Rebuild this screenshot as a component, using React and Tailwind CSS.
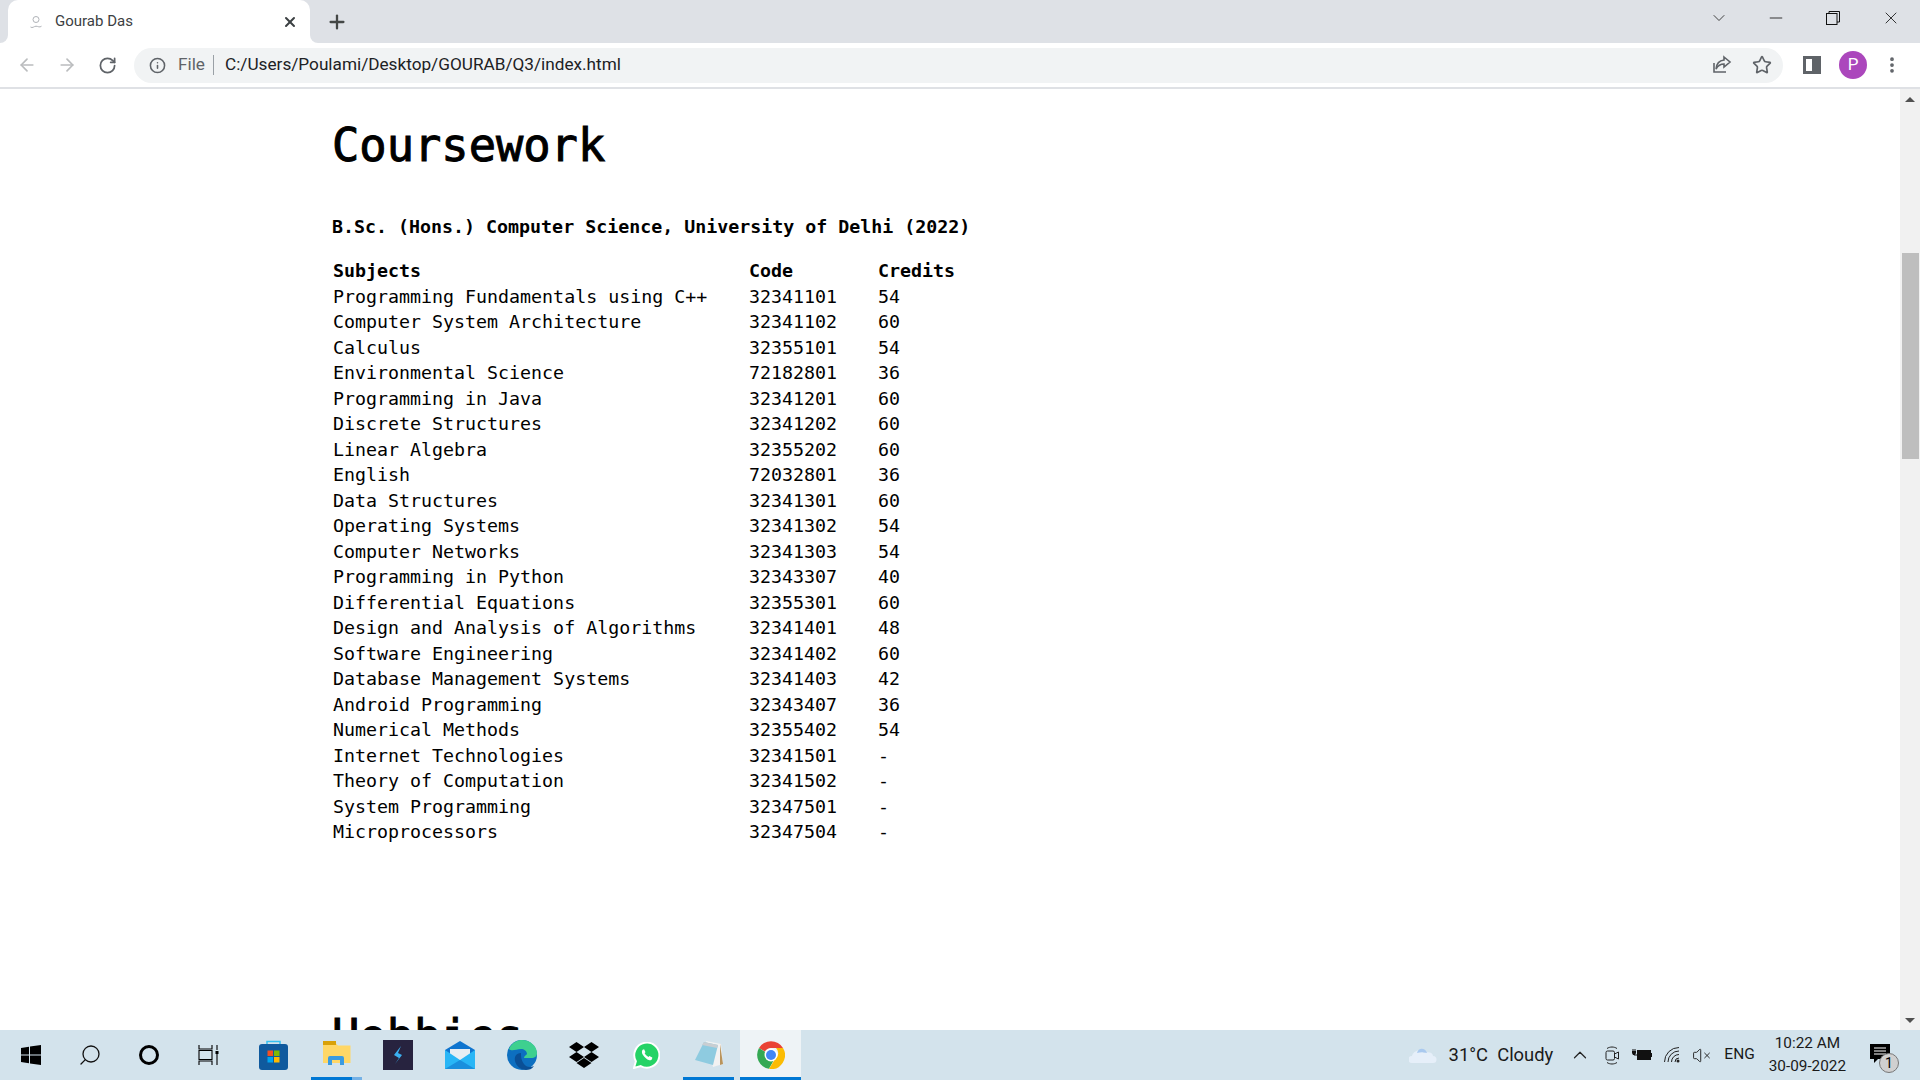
import React from 'react';
import { ArrowLeft, ArrowRight, RotateCw, Info, Star, X, Plus, ChevronDown, Minus, Search, ChevronUp, VolumeX, MoreVertical } from 'lucide-react';

const courses = [
  ['Programming Fundamentals using C++', '32341101', '54'],
  ['Computer System Architecture', '32341102', '60'],
  ['Calculus', '32355101', '54'],
  ['Environmental Science', '72182801', '36'],
  ['Programming in Java', '32341201', '60'],
  ['Discrete Structures', '32341202', '60'],
  ['Linear Algebra', '32355202', '60'],
  ['English', '72032801', '36'],
  ['Data Structures', '32341301', '60'],
  ['Operating Systems', '32341302', '54'],
  ['Computer Networks', '32341303', '54'],
  ['Programming in Python', '32343307', '40'],
  ['Differential Equations', '32355301', '60'],
  ['Design and Analysis of Algorithms', '32341401', '48'],
  ['Software Engineering', '32341402', '60'],
  ['Database Management Systems', '32341403', '42'],
  ['Android Programming', '32343407', '36'],
  ['Numerical Methods', '32355402', '54'],
  ['Internet Technologies', '32341501', '-'],
  ['Theory of Computation', '32341502', '-'],
  ['System Programming', '32347501', '-'],
  ['Microprocessors', '32347504', '-'],
];

const uiFont = "font-['Roboto',sans-serif]";

function TabFlare({ side }) {
  return (
    <div className="h-[8px] w-[8px] shrink-0 bg-white">
      <div className={`h-full w-full bg-[#dee1e6] ${side === 'left' ? 'rounded-br-[8px]' : 'rounded-bl-[8px]'}`} />
    </div>
  );
}

function TabStrip() {
  return (
    <div className="flex h-[43px] shrink-0 items-end bg-[#dee1e6]">
      <TabFlare side="left" />
      <div className="flex h-[43px] w-[302px] shrink-0 items-center rounded-t-[10px] bg-white pl-[20px] pr-[12px]">
        <svg width="16" height="16" viewBox="0 0 16 16" fill="none" stroke="#b0b3b8" strokeWidth="1">
          <circle cx="8" cy="5.5" r="3" />
          <path d="M2.5 13c2 1.6 3.5-.8 5.5-.8s3.5 1.6 5.5 0" />
        </svg>
        <span className={`ml-[11px] flex-1 text-[15px] text-[#3c4043] ${uiFont}`}>Gourab Das</span>
        <X size={16} strokeWidth={3} color="#3c4043" />
      </div>
      <TabFlare side="right" />
      <div className="ml-[8px] flex h-[43px] items-center">
        <Plus size={22} strokeWidth={2.5} color="#444746" />
      </div>
      <div className="flex flex-1 self-start pt-[9px]">
        <div className="ml-auto flex h-[18px] items-center">
          <ChevronDown size={20} strokeWidth={1} color="#222" />
          <Minus size={20} strokeWidth={1} color="#111" className="ml-[37px]" />
          <svg width="14" height="14" viewBox="0 0 14 14" fill="none" stroke="#111" strokeWidth="1" className="ml-[40px]">
            <rect x="0.5" y="2.5" width="10.5" height="11" />
            <path d="M3 2.5V.5h10.5v10.5H11" />
          </svg>
          <X size={20} strokeWidth={1} color="#111" className="ml-[41px] mr-[19px]" />
        </div>
      </div>
    </div>
  );
}

function Toolbar() {
  return (
    <div className="flex h-[46px] shrink-0 items-center border-b-2 border-[#dfe1e5] bg-white pl-[17px]">
      <ArrowLeft size={20} strokeWidth={2} color="#babcbe" />
      <ArrowRight size={20} strokeWidth={2} color="#babcbe" className="ml-[20px]" />
      <RotateCw size={19} strokeWidth={2.2} color="#5f6368" className="ml-[21px]" />
      <div className={`ml-[17px] flex h-[35px] w-[1649px] items-center rounded-full bg-[#f1f3f4] pl-[15px] text-[17.2px] ${uiFont}`}>
        <Info size={17} strokeWidth={2.2} color="#5f6368" />
        <span className="ml-[12px] text-[#5f6368]">File</span>
        <span className="ml-[8px] h-[20px] w-px bg-[#9aa0a6]" />
        <span className="ml-[11px] text-[#202124]">C:/Users/Poulami/Desktop/GOURAB/Q3/index.html</span>
        <svg width="20" height="20" viewBox="0 0 20 20" fill="none" stroke="#5f6368" strokeWidth="1.6" className="ml-auto">
          <path d="M2 8v9h12" />
          <path d="M12 2l6 5-6 5V9c-4 0-6 1.500-8 5 .5-5 3-8.500 8-9z" />
        </svg>
        <Star size={20} strokeWidth={2} color="#5f6368" className="ml-[20px] mr-[11px]" />
      </div>
      <div className="ml-[20px] flex h-[18px] w-[18px] items-center justify-end border-[3px] border-[#5f6368] bg-white">
        <div className="h-full w-[6px] bg-[#5f6368]" />
      </div>
      <div className={`ml-[18px] flex h-[28px] w-[28px] items-center justify-center rounded-full bg-[#ab47bc] text-[17px] text-white ${uiFont}`}>P</div>
      <MoreVertical size={20} strokeWidth={2.5} color="#5f6368" className="ml-[15px]" />
    </div>
  );
}

function Scrollbar() {
  return (
    <div className="flex w-[20px] shrink-0 flex-col items-center bg-[#f1f1f1]">
      <div className="flex h-[20px] items-center justify-center">
        <div className="h-0 w-0 border-x-[5px] border-b-[5px] border-x-transparent border-b-[#505050]" />
      </div>
      <div className="mt-[144px] h-[206px] w-[17px] bg-[#bebebe]" />
      <div className="mt-auto flex h-[20px] items-center justify-center">
        <div className="h-0 w-0 border-x-[5px] border-t-[5px] border-x-transparent border-t-[#505050]" />
      </div>
    </div>
  );
}

function Content() {
  return (
    <div className="min-w-0 flex-1 overflow-hidden bg-white pl-[332px] font-['DejaVu_Sans_Mono',monospace] text-black">
      <h1 className="mt-[27px] h-[60px] text-[45.4px] leading-[60px] [-webkit-text-stroke:1px_black]">Coursework</h1>
      <p className="mt-[39px] h-[24px] text-[18.3px] leading-[24px] font-bold">B.Sc. (Hons.) Computer Science, University of Delhi (2022)</p>
      <table className="mt-[19px] border-collapse text-[18.3px] leading-[25.5px]">
        <thead>
          <tr>
            <th className="w-[417px] pl-px text-left font-bold">Subjects</th>
            <th className="w-[129px] text-left font-bold">Code</th>
            <th className="text-left font-bold">Credits</th>
          </tr>
        </thead>
        <tbody>
          {courses.map((c) => (
            <tr key={c[1]}>
              <td className="pl-px whitespace-pre">{c[0]}</td>
              <td>{c[1]}</td>
              <td>{c[2]}</td>
            </tr>
          ))}
        </tbody>
      </table>
      <h1 className="mt-[162px] h-[60px] text-[45.4px] leading-[60px] [-webkit-text-stroke:1px_black]">Hobbies</h1>
    </div>
  );
}

function TaskIcon({ children, active, open, tail, className = 'w-[62px]' }) {
  return (
    <div className={`relative flex h-full shrink-0 items-center justify-center ${active ? 'bg-[#eef3f6]' : ''} ${className}`}>
      {children}
      {open && <div className="absolute bottom-0 left-0 h-[3px] w-full bg-[#0078d4]" />}
      {tail && <div className="absolute bottom-0 right-0 h-[3px] w-[10px] bg-[#74b1e6]" />}
    </div>
  );
}

function Taskbar() {
  return (
    <div className={`flex h-[50px] shrink-0 items-center bg-[#d3e3ec] text-[#1a1a1a] ${uiFont}`}>
      <TaskIcon className="w-[61px]">
        <svg width="20" height="20" viewBox="0 0 20 20" fill="#000"><path d="M0 3l8-1.200V9.500H0zM9 1.600L20 0v9.500H9zM0 10.500h8v7.700L0 17zM9 10.500h11V20L9 18.400z" /></svg>
      </TaskIcon>
      <TaskIcon className="w-[57px]"><Search size={24} strokeWidth={1.3} color="#111" className="-scale-x-100" /></TaskIcon>
      <TaskIcon className="w-[62px]"><div className="h-[20px] w-[20px] rounded-full border-[3px] border-black" /></TaskIcon>
      <TaskIcon className="w-[58px]">
        <svg width="22" height="20" viewBox="0 0 22 20" fill="none" stroke="#000" strokeWidth="1.100">
          <path d="M1 0v4h13V0M1 5.500h13v9H1zM1 20v-4h13v4M19 0v5M19 9v11" />
          <rect x="17.500" y="6" width="3" height="3" fill="#000" stroke="none" />
        </svg>
      </TaskIcon>
      <TaskIcon className="w-[71px]">
        <svg width="29" height="30" viewBox="0 0 29 30">
          <path d="M8 5V1.500h13V5" fill="none" stroke="#35c0f0" strokeWidth="1.500" />
          <rect y="4" width="29" height="26" rx="3" fill="#0f5a9e" />
          <rect x="8.500" y="10.500" width="5.500" height="5.500" fill="#f25022" />
          <rect x="15" y="10.500" width="5.500" height="5.500" fill="#7fba00" />
          <rect x="8.500" y="17" width="5.500" height="5.500" fill="#00a4ef" />
          <rect x="15" y="17" width="5.500" height="5.500" fill="#ffb900" />
        </svg>
      </TaskIcon>
      <TaskIcon open tail className="ml-[2px] w-[51px]">
        <svg width="28" height="24" viewBox="0 0 28 24" className="-translate-y-[2px]">
          <path d="M0 1.500h12l3 3h12.500V22H0z" fill="#ffd766" />
          <path d="M0 0h13v4H0z" fill="#d9a108" />
          <path d="M5 24v-7a2 2 0 012-2h12a2 2 0 012 2v7h-4v-5H9v5z" fill="#3b9be0" />
        </svg>
      </TaskIcon>
      <TaskIcon className="w-[72px]">
        <div className="flex h-[30px] w-[30px] items-center justify-center bg-[#27233f]">
          <svg width="10" height="18" viewBox="0 0 10 18" fill="#3bb0f0"><path d="M8 0L1 9l5 3-4 6 7-9-4-2z" /></svg>
        </div>
      </TaskIcon>
      <TaskIcon className="w-[52px]">
        <svg width="30" height="28" viewBox="0 0 30 28">
          <path d="M15 0l15 9v19H0V9z" fill="#0f75cf" />
          <path d="M5 8h20v7l-10 6-10-6z" fill="#e8eef3" />
          <path d="M0 9l15 10L30 9v19H0z" fill="#29b6f6" />
          <path d="M0 28L15 19l15 9z" fill="#1a8fdd" />
        </svg>
      </TaskIcon>
      <TaskIcon className="w-[72px]">
        <svg width="30" height="30" viewBox="0 0 30 30">
          <circle cx="15" cy="15" r="15" fill="#0d6fc0" />
          <path d="M2 9C5 2 11 0 15 0c8 0 15 6 15 13 0 3-2 5-6 5h-7c0-2 2-2.500 3-4 0-3-3-5-6-5-5 0-9 3-12 0z" fill="#3ed08f" />
          <path d="M14 13c-5 0-7 4-6 8 1 5 6 9 11 9 3 0 6-1 8-4-4 2-8 1-10-2-3-4-3-8-3-11z" fill="#0a4f96" />
        </svg>
      </TaskIcon>
      <TaskIcon className="w-[52px]">
        <svg width="30" height="26" viewBox="0 0 30 26" fill="#000">
          <path d="M7.500 0L15 5 7.500 10 0 5zM22.500 0L30 5l-7.500 5L15 5zM7.500 10L15 15l-7.500 5L0 15zM22.500 10L30 15l-7.500 5L15 15zM15 16l7.500 5L15 26l-7.500-5z" />
        </svg>
      </TaskIcon>
      <TaskIcon className="w-[72px]">
        <svg width="27" height="27" viewBox="0 0 28 28">
          <path d="M1 27l2-7A13 13 0 1 1 8 25z" fill="#25d366" stroke="#fff" strokeWidth="2" />
          <path d="M10 8c-1 1-1 3 0 5 2 3 4 5 7 6 2 0 3-1 3-3l-3-1.500-1 1c-2-1-3-2-4-4l1-1-1.500-3z" fill="#fff" />
        </svg>
      </TaskIcon>
      <TaskIcon open className="ml-[1px] w-[51px]">
        <svg width="28" height="28" viewBox="0 0 28 28" className="-translate-y-[1px]">
          <path d="M11 1l15 3 2 20-10 3z" fill="#f2f2f2" />
          <path d="M25 4l3 20-3 1z" fill="#b9945c" />
          <path d="M9 2l14 3-5 20L0 20z" fill="#8ecbe0" />
          <path d="M9 2l14 3-1 3L7 5z" fill="#c9ced2" />
        </svg>
      </TaskIcon>
      <TaskIcon active open className="ml-[6px] w-[61px]">
        <svg width="28" height="28" viewBox="0 0 28 28">
          <path d="M2 7A14 14 0 0 1 26 7H14a7 7 0 0 0-6.100 3.500z" fill="#ea4335" />
          <path d="M2 7a14 14 0 0 0 10 20.800l5-9a7 7 0 0 1-9-8z" fill="#34a853" />
          <path d="M26 7a14 14 0 0 1-14 21l6-10a7 7 0 0 0 1-11z" fill="#fbbc04" />
          <circle cx="14" cy="14" r="6.500" fill="#fff" />
          <circle cx="14" cy="14" r="5" fill="#4285f4" />
        </svg>
      </TaskIcon>

      <div className="ml-auto flex h-full items-center">
        <svg width="28" height="18" viewBox="0 0 28 18">
          <path d="M3 17a3.500 3.500 0 010-7c1-5 8-8 12-3 5-2 9 0 9 3a3.500 3.500 0 010 7z" fill="#e6eff9" />
          <path d="M8 7c1-5 8-6 10 0-3-1-7-1-10 0z" fill="#a9c9ef" />
        </svg>
        <span className="ml-[12px] text-[18.4px] whitespace-pre">31°C  Cloudy</span>
        <ChevronUp size={22} strokeWidth={1.300} color="#222" className="ml-[16px]" />
        <svg width="15" height="19" viewBox="0 0 15 19" fill="none" stroke="#222" strokeWidth="1" className="ml-[14px]">
          <rect x="1" y="5" width="8.500" height="9" rx="1.500" />
          <path d="M9.500 8l4-2v7l-4-2M2 2.500C5 .5 9 .5 12 2.500M2 16.500c3 2 7 2 10 0" />
        </svg>
        <svg width="20" height="12" viewBox="0 0 20 12" className="ml-[12px]">
          <path d="M1 0v2M3 0v2" stroke="#111" strokeWidth="1" />
          <path d="M0 2h4v2l-1 2H1L0 4z" fill="#111" />
          <path d="M2 6h4" stroke="#111" strokeWidth="1" />
          <rect x="5.500" y="1.500" width="13" height="9" fill="#111" stroke="#111" />
          <rect x="18.500" y="4" width="1.500" height="4" fill="#111" />
        </svg>
        <svg width="16" height="16" viewBox="0 0 16 16" fill="none" stroke="#222" strokeWidth="1" className="ml-[12px]">
          <path d="M.5 15A14.500 14.500 0 0 1 15 .5M4 15A11 11 0 0 1 15 4M7.500 15A7.500 7.500 0 0 1 15 7.500M11 15a4 4 0 0 1 4-4" />
          <circle cx="14" cy="14" r="1.500" fill="#222" stroke="none" />
        </svg>
        <VolumeX size={19} strokeWidth={1.200} color="#222" className="ml-[12px]" />
        <span className="ml-[13px] text-[15.500px]">ENG</span>
        <div className="ml-[14px] flex flex-col items-center text-[15.300px] leading-[23px]">
          <span>10:22 AM</span>
          <span>30-09-2022</span>
        </div>
        <div className="relative ml-[24px] mr-[21px] h-[23px] w-[29px]">
          <svg width="20" height="19" viewBox="0 0 20 19" className="absolute left-0 top-0" fill="#000">
            <path d="M0 0h20v15H8l-4 4v-4H0z" />
            <path d="M4 4h12M4 7h12M4 10h12" stroke="#fff" strokeWidth="1" />
          </svg>
          <div className="absolute left-[9px] top-[9px] flex h-[20px] w-[20px] items-center justify-center rounded-full border border-[#777] bg-[#d0d0d0] text-[14px] leading-none text-black">1</div>
        </div>
      </div>
    </div>
  );
}

export default function App() {
  return (
    <div className="flex h-screen w-full flex-col overflow-hidden bg-white">
      <TabStrip />
      <Toolbar />
      <div className="flex min-h-0 flex-1">
        <Content />
        <Scrollbar />
      </div>
      <Taskbar />
    </div>
  );
}
